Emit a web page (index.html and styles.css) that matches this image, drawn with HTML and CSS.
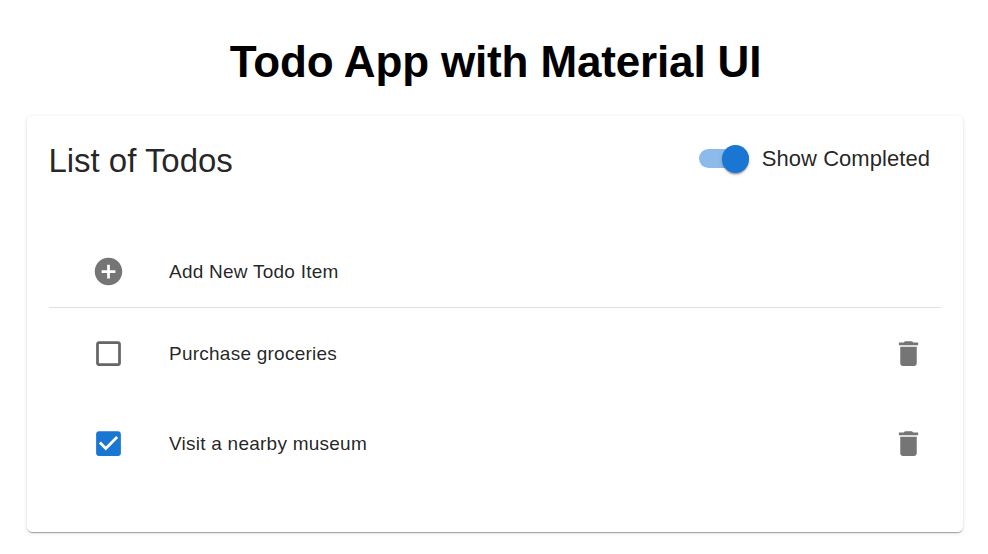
FILE: index.html
```html
<!DOCTYPE html>
<html lang="en">
<head>
<meta charset="utf-8">
<title>Todo App</title>
<link rel="stylesheet" href="styles.css">
</head>
<body>
<h1 class="title">Todo App with Material UI</h1>
<main class="card">
  <header class="card-header">
    <h2 class="heading">List of Todos</h2>
    <label class="toggle"><span class="track"><span class="thumb"></span></span><span class="toggle-label">Show Completed</span></label>
  </header>
  <ul class="list">
    <li class="row row-add">
      <svg class="icon" viewBox="0 0 24 24"><path d="M12 2C6.480 2 2 6.480 2 12s4.480 10 10 10 10-4.480 10-10S17.520 2 12 2zm5 11h-4v4h-2v-4H7v-2h4V7h2v4h4v2z"/></svg>
      <span class="text">Add New Todo Item</span>
    </li>
    <li class="row">
      <svg class="icon unchecked" viewBox="0 0 24 24"><path d="M19 5v14H5V5h14m0-2H5c-1.100 0-2 .9-2 2v14c0 1.100.9 2 2 2h14c1.100 0 2-.9 2-2V5c0-1.100-.9-2-2-2z"/></svg>
      <span class="text">Purchase groceries</span>
      <svg class="icon" viewBox="0 0 24 24"><path d="M6 19c0 1.100.9 2 2 2h8c1.100 0 2-.9 2-2V7H6v12zM19 4h-3.500l-1-1h-5l-1 1H5v2h14V4z"/></svg>
    </li>
    <li class="row">
      <svg class="icon checked" viewBox="0 0 24 24"><path d="M19 3H5c-1.110 0-2 .9-2 2v14c0 1.100.89 2 2 2h14c1.110 0 2-.9 2-2V5c0-1.100-.89-2-2-2zm-9 14l-5-5 1.410-1.410L10 14.170l7.590-7.590L19 8l-9 9z"/></svg>
      <span class="text">Visit a nearby museum</span>
      <svg class="icon" viewBox="0 0 24 24"><path d="M6 19c0 1.100.9 2 2 2h8c1.100 0 2-.9 2-2V7H6v12zM19 4h-3.500l-1-1h-5l-1 1H5v2h14V4z"/></svg>
    </li>
  </ul>
</main>
</body>
</html>
```
FILE: styles.css
```css
* { box-sizing: border-box; }
body { margin: 0; min-height: 100vh; padding: 36px 25px 0 27px; background: #fff; color: rgba(0,0,0,.87); font-family: "Liberation Sans", Arial, sans-serif; }
.title { margin: 0 0 27.500px 1px; height: 52px; line-height: 52px; font-size: 44px; letter-spacing: -.15px; text-align: center; color: #000; }
.card { height: 416.500px; padding: 21.500px 22px; border-radius: 5.500px; background: #fff; box-shadow: 0 2px 1px -1px rgba(0,0,0,.2), 0 1px 1px rgba(0,0,0,.14), 0 1px 4px rgba(0,0,0,.12); }
.card-header { display: flex; justify-content: space-between; align-items: center; height: 46px; padding-right: 11px; }
.heading { margin: 2px 0 0 -.5px; font-size: 33px; font-weight: 400; letter-spacing: -.03px; }
.toggle { display: flex; align-items: center; gap: 12.500px; margin-top: -3px; }
.track { display: flex; align-items: center; justify-content: flex-end; width: 50px; height: 19px; border-radius: 10px; background: #8cbaea; }
.thumb { width: 27.500px; height: 28px; flex: none; border-radius: 50%; background: #1976d2; box-shadow: 0 3px 1.400px -1.400px rgba(0,0,0,.2), 0 1.400px 1.400px rgba(0,0,0,.14), 0 1.400px 4.100px rgba(0,0,0,.12); }
.toggle-label { font-size: 22px; letter-spacing: .05px; }
.list { list-style: none; margin: 52px 0 0; padding: 0; }
.row { display: flex; align-items: center; height: 90px; padding: 0 16px 0 43px; }
.row-add { height: 73px; border-bottom: 1px solid #e0e0e0; }
.text { flex: 1; margin-left: 44px; padding-top: 2px; font-size: 19px; letter-spacing: .24px; }
.icon { width: 33px; height: 33px; fill: #757575; flex: none; }
.unchecked { fill: #666; }
.checked { fill: #1976d2; }
```
